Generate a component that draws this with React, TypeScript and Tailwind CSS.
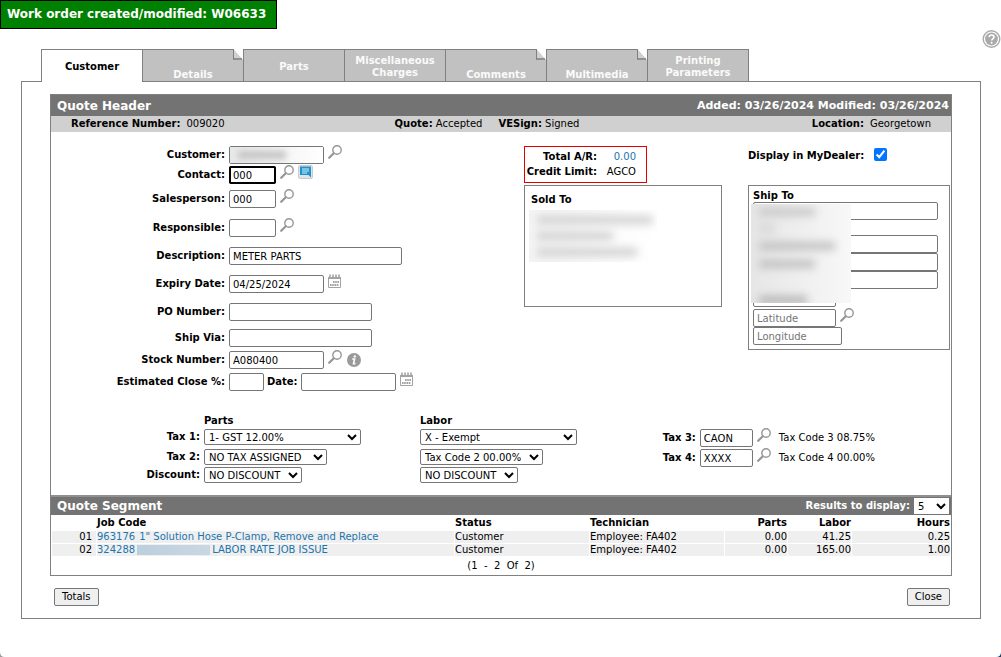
import { useState } from 'react';
import type { InputHTMLAttributes, ReactNode } from 'react';

interface Tab {
  label: string;
  active?: boolean;
  folded?: boolean;
}

interface Segment {
  line: string;
  code: string;
  masked?: boolean;
  title: string;
  status: string;
  technician: string;
  parts: string;
  labor: string;
  hours: string;
}

const TABS: Tab[] = [
  { label: 'Customer', active: true },
  { label: 'Details', folded: true },
  { label: 'Parts' },
  { label: 'Miscellaneous Charges' },
  { label: 'Comments', folded: true },
  { label: 'Multimedia', folded: true },
  { label: 'Printing Parameters' },
];

const SEGMENTS: Segment[] = [
  {
    line: '01',
    code: '963176',
    title: '1" Solution Hose P-Clamp, Remove and Replace',
    status: 'Customer',
    technician: 'Employee: FA402',
    parts: '0.00',
    labor: '41.25',
    hours: '0.25',
  },
  {
    line: '02',
    code: '324288',
    masked: true,
    title: 'LABOR RATE JOB ISSUE',
    status: 'Customer',
    technician: 'Employee: FA402',
    parts: '0.00',
    labor: '165.00',
    hours: '1.00',
  },
];

export default function App() {
  const [display, setDisplay] = useState(true);

  return (
    <div className="relative min-h-screen overflow-hidden bg-white font-['DejaVu_Sans',Verdana,sans-serif] text-[10px] leading-3 text-black">
      <header className="flex items-start justify-between">
        <div
          role="status"
          className="border border-black bg-[#008000] py-1.5 pr-2.5 pl-1.5 text-xs leading-[15px] font-bold text-white"
        >
          Work order created/modified: W06633
        </div>
        <button type="button" aria-label="Help" className="pt-[30px]">
          <HelpIcon />
        </button>
      </header>

      <nav className="mt-px ml-[41px] flex">
        {TABS.map((tab) => (
          <TabButton key={tab.label} tab={tab} />
        ))}
      </nav>

      <main className="mr-5 ml-[21px] border border-[#808080] px-7 pt-3 pb-3">
        <div className="border border-[#808080]">
          <div className="flex h-[21px] items-center justify-between bg-[#737373] pr-0.5 pl-1.5 font-bold text-white">
            <h1 className="text-xs">Quote Header</h1>
            <span className="text-[11px]">Added: 03/26/2024 Modified: 03/26/2024</span>
          </div>
          <div className="grid h-4 grid-cols-3 items-center bg-[#d0d0d0] px-5">
            <div>
              <b>Reference Number:</b>
              <span className="ml-1.5">009020</span>
            </div>
            <div className="pr-7 text-center whitespace-nowrap">
              <b>Quote:</b> Accepted
              <b className="ml-4">VESign:</b> Signed
            </div>
            <div className="text-right">
              <b>Location:</b>
              <span className="ml-1.5">Georgetown</span>
            </div>
          </div>

          <div className="grid grid-cols-[minmax(0,1fr)_198px_202px] gap-x-[26px] pt-3.5 pr-px">
            <CustomerFields />

            <section>
              <dl className="grid w-[123px] grid-cols-[72px_1fr] gap-x-1 gap-y-[3px] border border-[#e60000] py-1 pr-2.5 text-right">
                <dt className="font-bold whitespace-nowrap">Total A/R:</dt>
                <dd className="text-[#1b75ae]">0.00</dd>
                <dt className="font-bold whitespace-nowrap">Credit Limit:</dt>
                <dd>AGCO</dd>
              </dl>
              <div className="mt-0.5 h-[122px] border border-[#808080] px-1.5 pt-2">
                <h2 className="font-bold">Sold To</h2>
                <div className="mt-1 -ml-0.5 h-[52px] w-[128px] overflow-hidden bg-linear-to-r from-[#f4f4f4] to-white pt-1.5 pl-2">
                  <Smudge width="w-[116px]" />
                  <Smudge width="w-[76px]" />
                  <Smudge width="w-[100px]" />
                </div>
              </div>
            </section>

            <section>
              <label className="flex h-[39px] items-start gap-2.5 font-bold whitespace-nowrap">
                <span className="pt-1">Display in MyDealer:</span>
                <input
                  type="checkbox"
                  checked={display}
                  onChange={(e) => setDisplay(e.target.checked)}
                  className="mt-0.5 size-[13px] accent-[#0075ff]"
                />
              </label>
              <ShipTo />
            </section>
          </div>

          <Taxes />
          <QuoteSegment />
        </div>

        <div className="mt-3 flex justify-between pr-0.5 pl-1">
          <ActionButton>Totals</ActionButton>
          <ActionButton>Close</ActionButton>
        </div>
      </main>

      {/* rounded window corners */}
      <svg className="absolute bottom-0 left-0" width="5" height="5" viewBox="0 0 5 5" aria-hidden="true">
        <path d="M0 0Q0 5 5 5H0Z" fill="#9a9a9a" />
      </svg>
      <svg className="absolute right-0 bottom-0" width="5" height="5" viewBox="0 0 5 5" aria-hidden="true">
        <path d="M5 0Q5 5 0 5H5Z" fill="#1d3f63" />
      </svg>
    </div>
  );
}

function TabButton({ tab }: { tab: Tab }) {
  if (tab.active) {
    return (
      <button
        type="button"
        className="relative -mb-px h-[33px] w-[101px] border-t border-l border-[#808080] bg-white pt-0.5 font-bold"
      >
        {tab.label}
      </button>
    );
  }
  return (
    <button
      type="button"
      className={`relative flex h-8 w-[101px] justify-center border-t border-l border-[#808080] bg-[#c1c1c1] px-2 pt-0.5 font-bold text-[#fafafa] last:w-[102px] last:border-r ${
        tab.folded ? 'items-end' : 'items-center'
      }`}
    >
      {tab.label}
      {tab.folded && (
        <svg className="absolute -top-px right-0" width="10" height="11" viewBox="0 0 10 11" aria-hidden="true">
          <path d="M0 0H10V11Z" fill="#fff" />
          <path d="M0 0V11H10Z" fill="#d0d0d0" />
          <path d="M0.5 0V10.5" stroke="#808080" />
          <path d="M0 10H9" stroke="#808080" strokeWidth="1.6" />
        </svg>
      )}
    </button>
  );
}

function CustomerFields() {
  return (
    <section>
      <Row id="customer" label="Customer:">
        <div className="relative">
          <Field id="customer" className="w-[95px]" />
          <div className="absolute inset-px overflow-hidden bg-linear-to-r from-[#e8e8e8] to-white">
            <div className="mt-1 ml-2 h-2 w-12 bg-[#c4c4c4] blur-[3px]" />
          </div>
        </div>
        <LookupIcon />
      </Row>
      <Row id="contact" label="Contact:" gap="mt-0.5">
        <Field
          id="contact"
          defaultValue="000"
          className="w-[47px] outline-2 -outline-offset-2 outline-black"
        />
        <LookupIcon />
        <NoteIcon />
      </Row>
      <Row id="salesperson" label="Salesperson:" gap="mt-1.5">
        <Field id="salesperson" defaultValue="000" className="w-[47px]" />
        <LookupIcon />
      </Row>
      <Row id="responsible" label="Responsible:" gap="mt-[11px]">
        <Field id="responsible" className="w-[47px]" />
        <LookupIcon />
      </Row>
      <Row id="description" label="Description:" gap="mt-2.5">
        <Field id="description" defaultValue="METER PARTS" className="w-[173px]" />
      </Row>
      <Row id="expiry" label="Expiry Date:" gap="mt-2.5">
        <Field id="expiry" defaultValue="04/25/2024" className="w-[95px]" />
        <CalendarIcon />
      </Row>
      <Row id="po" label="PO Number:" gap="mt-2.5">
        <Field id="po" className="w-[143px]" />
      </Row>
      <Row id="shipvia" label="Ship Via:" gap="mt-2">
        <Field id="shipvia" className="w-[143px]" />
      </Row>
      <Row id="stock" label="Stock Number:" gap="mt-1">
        <Field id="stock" defaultValue="A080400" className="w-[95px]" />
        <LookupIcon />
        <InfoIcon />
      </Row>
      <Row id="closepct" label="Estimated Close %:" gap="mt-1">
        <Field id="closepct" className="w-[35px]" />
        <label htmlFor="closedate" className="mx-[3px] font-bold">
          Date:
        </label>
        <Field id="closedate" className="w-[95px]" />
        <CalendarIcon />
      </Row>
    </section>
  );
}

function ShipTo() {
  return (
    <fieldset className="relative h-[165px] border border-[#808080] px-1 pt-1">
      <h2 className="font-bold">Ship To</h2>
      <Field aria-label="Name" className="block w-[185px]" />
      <Field aria-label="Address 1" className="mt-[15px] block w-[185px]" />
      <Field aria-label="Address 2" className="block w-[185px]" />
      <Field aria-label="City" className="block w-[185px]" />
      <Field aria-label="Postal code" className="block w-[83px]" />
      <div className="mt-0.5 flex h-[18px] items-center">
        <Field aria-label="Latitude" placeholder="Latitude" className="w-[83px]" />
        <LookupIcon />
      </div>
      <Field aria-label="Longitude" placeholder="Longitude" className="block w-[89px]" />
      {/* private address lines */}
      <div className="absolute top-[18px] left-0.5 h-[99px] w-[100px] overflow-hidden bg-linear-to-r from-[#e6e6e6] to-[#f8f8f8] pt-1 pl-2">
        <div className="h-2 w-14 bg-[#c8c8c8] blur-[4px]" />
        <div className="mt-2 h-2 w-4 bg-[#d6d6d6] blur-[4px]" />
        <div className="mt-2.5 h-2 w-[76px] bg-[#c0c0c0] blur-[4px]" />
        <div className="mt-2.5 h-2 w-14 bg-[#c0c0c0] blur-[4px]" />
        <div className="mt-7 h-2 w-12 bg-[#b4b4b4] blur-[4px]" />
      </div>
    </fieldset>
  );
}

function Taxes() {
  return (
    <section className="mt-6 grid grid-cols-[149px_212px_minmax(0,1fr)_auto] gap-x-1 pb-3">
      <div className="pt-3.5 text-right font-bold">
        <label htmlFor="tax1" className="block leading-4">
          Tax 1:
        </label>
        <label htmlFor="tax2" className="mt-1 block leading-4">
          Tax 2:
        </label>
        <label htmlFor="discount" className="mt-0.5 block leading-4">
          Discount:
        </label>
      </div>
      <div>
        <h3 className="mb-0.5 font-bold">Parts</h3>
        <Select id="tax1" options={['1- GST 12.00%']} className="w-[157px]" />
        <Select id="tax2" options={['NO TAX ASSIGNED']} className="mt-1 w-[123px]" />
        <Select id="discount" options={['NO DISCOUNT']} className="mt-0.5 w-[98px]" />
      </div>
      <div>
        <h3 className="mb-0.5 font-bold">Labor</h3>
        <Select aria="Labor tax 1" options={['X - Exempt']} className="w-[157px]" />
        <Select aria="Labor tax 2" options={['Tax Code 2 00.00%']} className="mt-1 w-[123px]" />
        <Select aria="Labor discount" options={['NO DISCOUNT']} className="mt-0.5 w-[98px]" />
      </div>
      <div className="space-y-0.5 pt-3.5 pr-[76px]">
        <CodeRow id="tax3" label="Tax 3:" value="CAON" note="Tax Code 3 08.75%" />
        <CodeRow id="tax4" label="Tax 4:" value="XXXX" note="Tax Code 4 00.00%" />
      </div>
    </section>
  );
}

function QuoteSegment() {
  return (
    <section>
      <div className="flex h-5 items-center justify-between border-t-2 border-[#909090] bg-[#737373] pr-0.5 pl-1.5 font-bold text-white">
        <h2 className="text-xs">Quote Segment</h2>
        <label className="flex items-center gap-1">
          Results to display:
          <select className="h-4 w-[35px] bg-white font-normal text-black">
            <option>5</option>
          </select>
        </label>
      </div>
      <table className="w-full table-fixed border-separate border-spacing-px">
        <colgroup>
          <col className="w-[44px]" />
          <col />
          <col className="w-[134px]" />
          <col className="w-[134px]" />
          <col className="w-[62px]" />
          <col className="w-[63px]" />
          <col className="w-[98px]" />
        </colgroup>
        <thead>
          <tr className="h-3.5 text-left">
            <th />
            <th>Job Code</th>
            <th>Status</th>
            <th>Technician</th>
            <th className="text-right">Parts</th>
            <th className="text-right">Labor</th>
            <th className="text-right">Hours</th>
          </tr>
        </thead>
        <tbody>
          {SEGMENTS.map((s) => (
            <tr key={s.line} className="bg-[#efefef]">
              <td className="pr-1 text-right">{s.line}</td>
              <td>
                <a href="#" className="flex text-[#1b75ae]">
                  {s.code}
                  {s.masked ? (
                    <span className="mx-0.5 my-px w-[73px] bg-linear-to-r from-[#bccfde] to-[#c9d7e2]" />
                  ) : (
                    <span className="w-1" />
                  )}
                  {s.title}
                </a>
              </td>
              <td>{s.status}</td>
              <td>{s.technician}</td>
              <td className="text-right">{s.parts}</td>
              <td className="text-right">{s.labor}</td>
              <td className="text-right">{s.hours}</td>
            </tr>
          ))}
        </tbody>
      </table>
      <p className="py-[3px] text-center whitespace-pre">(1  -  2  Of  2)</p>
    </section>
  );
}

function Row({
  id,
  label,
  gap = '',
  children,
}: {
  id: string;
  label: string;
  gap?: string;
  children: ReactNode;
}) {
  return (
    <div className={`flex h-[18px] items-center ${gap}`}>
      <label htmlFor={id} className="mr-1 w-[174px] text-right font-bold">
        {label}
      </label>
      {children}
    </div>
  );
}

function Field({ className = '', ...props }: InputHTMLAttributes<HTMLInputElement>) {
  return (
    <input
      type="text"
      className={`h-[18px] rounded-xs border border-[#767676] bg-white px-[3px] placeholder:text-[#757575] ${className}`}
      {...props}
    />
  );
}

function Select({
  id,
  aria,
  options,
  className,
}: {
  id?: string;
  aria?: string;
  options: string[];
  className: string;
}) {
  return (
    <select
      id={id}
      aria-label={aria}
      className={`block h-4 rounded-xs border border-[#767676] bg-white ${className}`}
    >
      {options.map((o) => (
        <option key={o}>{o}</option>
      ))}
    </select>
  );
}

function CodeRow({ id, label, value, note }: { id: string; label: string; value: string; note: string }) {
  return (
    <div className="flex h-[18px] items-center">
      <label htmlFor={id} className="mr-1 font-bold">
        {label}
      </label>
      <Field id={id} defaultValue={value} className="w-[53px]" />
      <LookupIcon />
      <span className="ml-2">{note}</span>
    </div>
  );
}

function ActionButton({ children }: { children: ReactNode }) {
  return (
    <button type="button" className="h-[18px] rounded-xs border border-[#767676] bg-[#efefef] px-[7px]">
      {children}
    </button>
  );
}

function Smudge({ width }: { width: string }) {
  return <div className={`mb-2 h-2 bg-[#d0d0d0] blur-[4px] ${width}`} />;
}

function LookupIcon() {
  return (
    <button type="button" aria-label="Lookup" className="mb-1.5 ml-1 shrink-0">
      <svg width="14" height="14" viewBox="0 0 14 14" fill="none" stroke="#969696">
        <circle cx="9" cy="5" r="4.2" strokeWidth="1.4" />
        <path d="M5.8 8.2L1.2 12.8" strokeWidth="2.2" strokeLinecap="round" />
      </svg>
    </button>
  );
}

function NoteIcon() {
  return (
    <button type="button" aria-label="Contact notes" className="mb-1.5 ml-1 shrink-0">
      <svg width="15" height="14" viewBox="0 0 15 14">
        <rect x="0.5" y="0.5" width="14" height="13" rx="1.5" fill="#dfe3e5" stroke="#c8cdd0" />
        <path d="M2 1.5H13V12.5L10.5 10H2Z" fill="#1e93cc" />
        <path d="M4 4H11M4 6H11M4 8H9" stroke="#d7f0fc" />
      </svg>
    </button>
  );
}

function CalendarIcon() {
  return (
    <button type="button" aria-label="Pick date" className="mb-1.5 ml-1 shrink-0">
      <svg width="13" height="14" viewBox="0 0 13 14" fill="none" stroke="#a3a3a3">
        <path d="M0.5 3V13.5H12.5V3" />
        <path d="M0 4H13" strokeWidth="2" />
        <path d="M2 0.5V4M5 0.5V4M8 0.5V4M11 0.5V4" strokeWidth="1.6" />
        <path d="M5 8H11" strokeWidth="2" strokeDasharray="1.6 0.6" />
        <path d="M2 11H11" strokeWidth="2" strokeDasharray="1.6 0.6" />
      </svg>
    </button>
  );
}

function InfoIcon() {
  return (
    <button type="button" aria-label="Stock information" className="ml-[5px] shrink-0">
      <svg width="14" height="14" viewBox="0 0 14 14">
        <circle cx="7" cy="7" r="7" fill="#9a9a9a" />
        <circle cx="7.8" cy="3.4" r="1.2" fill="#fff" />
        <path d="M5.2 6H7.6L6.5 10.6H8.4" fill="none" stroke="#fff" strokeWidth="1.6" />
      </svg>
    </button>
  );
}

function HelpIcon() {
  return (
    <svg width="19" height="18" viewBox="0 0 19 18" fill="none">
      <circle cx="9.5" cy="9" r="8.3" stroke="#aaa" strokeWidth="1.4" />
      <circle cx="9.5" cy="9" r="6.4" fill="#aaa" />
      <path d="M7.2 7.2C7.2 4.3 12 4.3 12 7C12 8.8 9.6 8.8 9.6 10.6" stroke="#fff" strokeWidth="1.6" />
      <circle cx="9.6" cy="12.8" r="1" fill="#fff" />
    </svg>
  );
}
